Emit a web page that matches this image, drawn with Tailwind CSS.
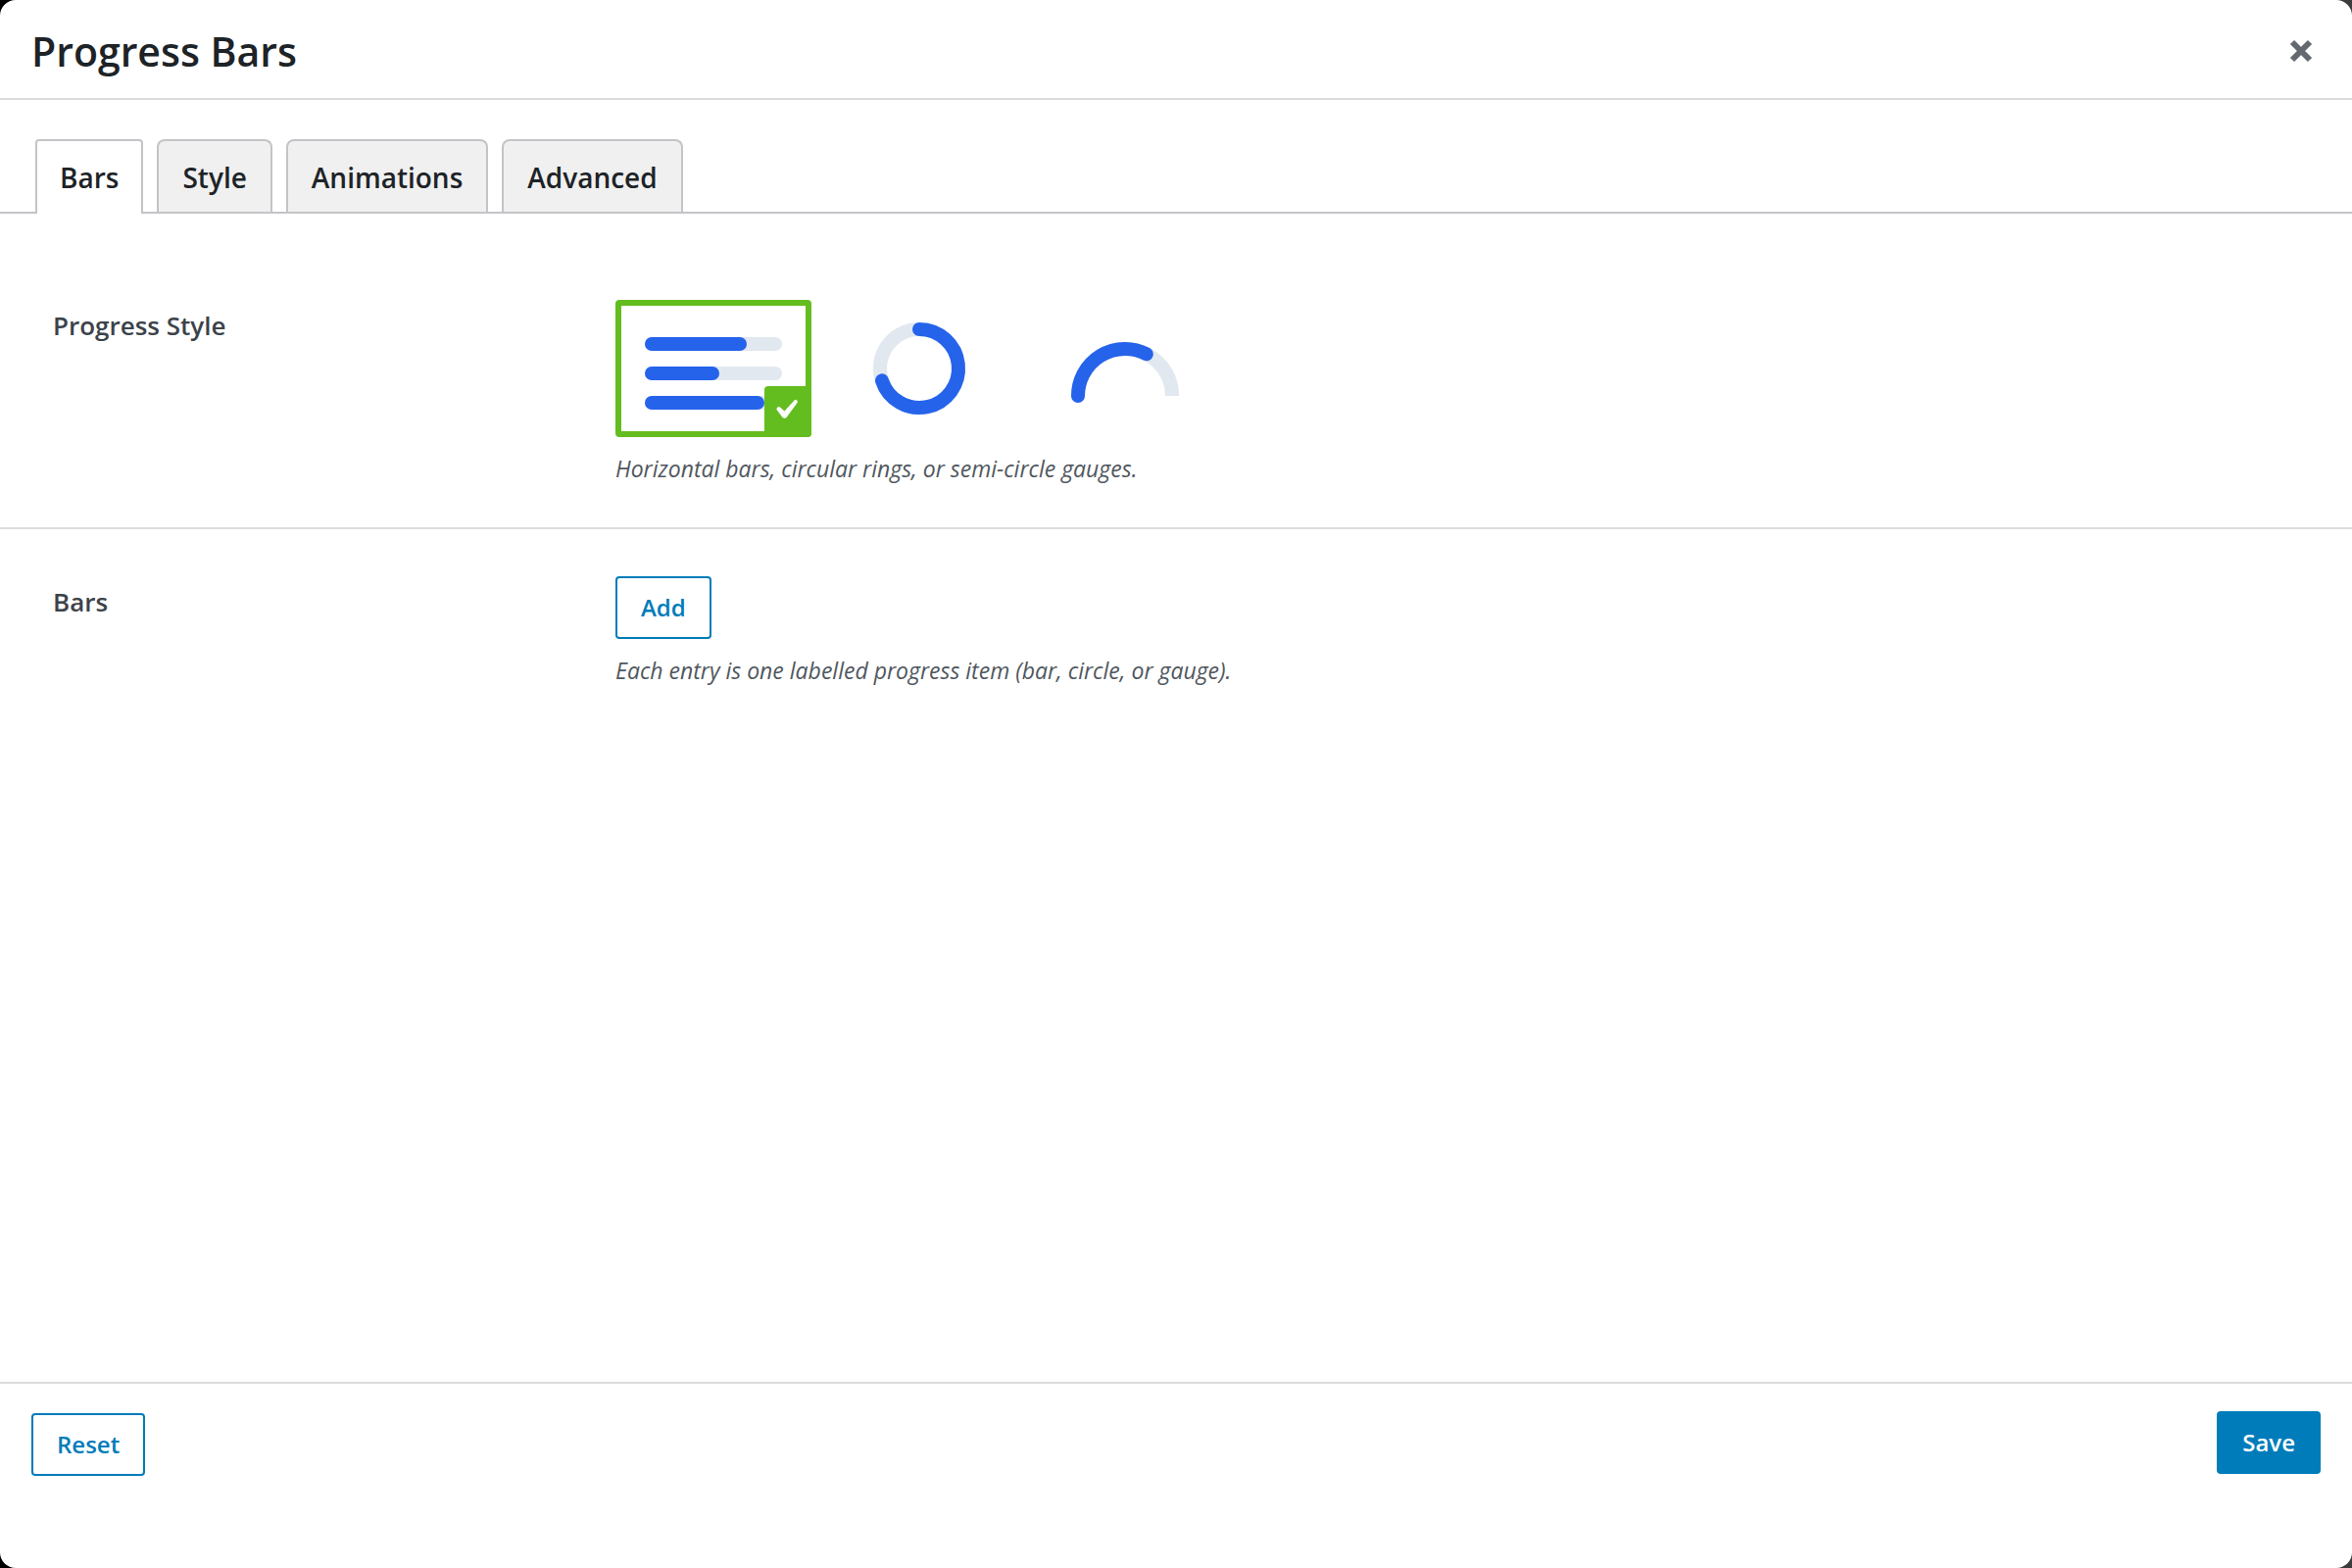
<!DOCTYPE html>
<html lang="en">
<head>
    <meta charset="UTF-8">
    <meta name="viewport" content="width=device-width, initial-scale=1.0">
    <title>Progress Bars</title>
    <script src="https://cdn.jsdelivr.net/npm/@tailwindcss/browser@4"></script>
</head>
<body class="bg-linear-to-r from-black to-[#3c3c3c] font-['Open_Sans','Noto_Sans',sans-serif] text-[#1d2327]">
    <div class="flex min-h-screen flex-col rounded-2xl bg-white">
        <header class="flex h-[102px] items-center justify-between border-b-2 border-[#dcdcde] px-8 pt-1">
            <h1 class="text-[41px] leading-[56px] font-semibold">Progress Bars</h1>
            <button type="button" aria-label="Close" class="flex size-10 items-center justify-center text-[#646970]">
                <svg class="size-6" viewBox="0 0 24 24" fill="none" stroke="currentColor" stroke-width="6">
                    <path d="M3 3l18 18M21 3L3 21"/>
                </svg>
            </button>
        </header>

        <div role="tablist" class="mt-10 flex gap-[14px] border-b-2 border-[#c3c4c7] px-9 text-[28px] leading-9 font-semibold">
            <button type="button" role="tab" aria-selected="true" class="-mb-[2px] h-[76px] rounded-t border-2 border-b-0 border-[#c3c4c7] bg-white px-[23px]">Bars</button>
            <button type="button" role="tab" aria-selected="false" class="h-[74px] rounded-t-lg border-2 border-b-0 border-[#c3c4c7] bg-[#f0f0f0] px-6 pt-[2px]">Style</button>
            <button type="button" role="tab" aria-selected="false" class="h-[74px] rounded-t-lg border-2 border-b-0 border-[#c3c4c7] bg-[#f0f0f0] px-6 pt-[2px]">Animations</button>
            <button type="button" role="tab" aria-selected="false" class="h-[74px] rounded-t-lg border-2 border-b-0 border-[#c3c4c7] bg-[#f0f0f0] px-6 pt-[2px]">Advanced</button>
        </div>

        <main class="flex-1 pt-10">
            <section class="flex border-b-2 border-[#dcdcde] px-[54px] pt-12 pb-[42px]">
                <h2 id="style-label" class="w-[574px] shrink-0 pt-2 text-[26px] leading-9 font-semibold text-[#3c434a]">Progress Style</h2>
                <div>
                    <div role="radiogroup" aria-labelledby="style-label" class="flex gap-[10px]">
                        <label class="relative block cursor-pointer">
                            <input type="radio" name="progress-style" value="bars" aria-label="Bars" class="peer sr-only" checked>
                            <svg class="h-[140px] w-[200px]" viewBox="0 0 200 140">
                                <g fill="#e2e8f0">
                                    <rect x="30" y="38" width="140" height="14" rx="7"/>
                                    <rect x="30" y="68" width="140" height="14" rx="7"/>
                                    <rect x="30" y="98" width="140" height="14" rx="7"/>
                                </g>
                                <g fill="#2563eb">
                                    <rect x="30" y="38" width="104" height="14" rx="7"/>
                                    <rect x="30" y="68" width="76" height="14" rx="7"/>
                                    <rect x="30" y="98" width="122" height="14" rx="7"/>
                                </g>
                            </svg>
                            <span class="absolute inset-0 hidden rounded border-6 border-[#64bd1f] peer-checked:block"></span>
                            <span class="absolute right-0 bottom-0 hidden h-[52px] w-12 rounded-tl rounded-br bg-[#64bd1f] peer-checked:block">
                                <svg class="h-full w-full" viewBox="0 0 48 52" fill="#fff">
                                    <path d="M30.5 14.5Q32 13 33.5 15Q34.5 16 33.5 17L22.5 32Q20.5 33.5 18.5 32L12.5 24Q12 22.5 13.5 21.5Q15 20.5 16.5 22L20.5 25.5Z"/>
                                </svg>
                            </span>
                        </label>
                        <label class="block cursor-pointer">
                            <input type="radio" name="progress-style" value="circle" aria-label="Circle" class="sr-only">
                            <svg class="h-[140px] w-[200px]" viewBox="0 0 200 140" fill="none" stroke-width="14">
                                <circle cx="100" cy="70" r="40" stroke="#e2e8f0"/>
                                <path d="M100 30A40 40 0 1 1 61.96 82.36" stroke="#2563eb" stroke-linecap="round"/>
                            </svg>
                        </label>
                        <label class="block cursor-pointer">
                            <input type="radio" name="progress-style" value="gauge" aria-label="Gauge" class="sr-only">
                            <svg class="h-[140px] w-[200px]" viewBox="0 0 200 140" fill="none" stroke-width="14">
                                <path d="M52 98A48 48 0 0 1 148 98" stroke="#e2e8f0"/>
                                <path d="M52 98A48 48 0 0 1 121.8 55.23" stroke="#2563eb" stroke-linecap="round"/>
                            </svg>
                        </label>
                    </div>
                    <p class="mt-[14px] text-[23px] leading-9 text-[#50575e] italic">Horizontal bars, circular rings, or semi-circle gauges.</p>
                </div>
            </section>

            <section class="flex px-[54px] pt-12 pb-10">
                <h2 class="w-[574px] shrink-0 pt-2 text-[26px] leading-9 font-semibold text-[#3c434a]">Bars</h2>
                <div>
                    <button type="button" class="h-16 rounded border-2 border-[#007cba] px-6 text-[24px] leading-8 font-semibold text-[#007cba]">Add</button>
                    <p class="mt-[14px] text-[23px] leading-9 text-[#50575e] italic">Each entry is one labelled progress item (bar, circle, or gauge).</p>
                </div>
            </section>
        </main>

        <footer class="flex h-[190px] items-start justify-between border-t-2 border-[#dcdcde] px-8 pt-7">
            <button type="button" class="mt-[2px] h-16 rounded border-2 border-[#007cba] px-6 text-[24px] leading-8 font-semibold text-[#007cba]">Reset</button>
            <button type="button" class="h-16 rounded border-2 border-[#007cba] bg-[#007cba] px-6 text-[24px] leading-8 font-semibold text-white">Save</button>
        </footer>
    </div>
</body>
</html>
